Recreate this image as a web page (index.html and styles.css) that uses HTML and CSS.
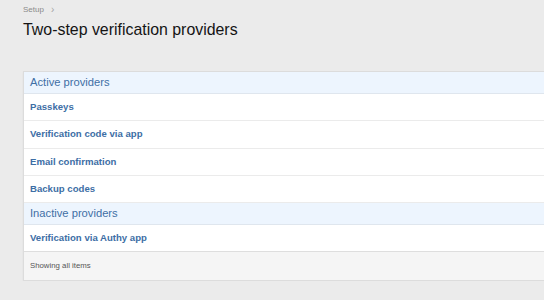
FILE: index.html
```html
<!DOCTYPE html>
<html lang="en">

<head>
    <meta charset="UTF-8">
    <title>Two-step verification providers</title>
    <link rel="stylesheet" href="styles.css">
</head>

<body>
    <div class="side">
        <div class="crumbs">
            <a href="#">Setup</a>
            <span class="sep">&rsaquo;</span>
        </div>
        <h1>Two-step verification providers</h1>

        <section class="blok">
            <h2 class="gruppe">Active providers</h2>
            <a class="raekke" href="#">Passkeys</a>
            <a class="raekke" href="#">Verification code via app</a>
            <a class="raekke" href="#">Email confirmation</a>
            <a class="raekke" href="#">Backup codes</a>
            <h2 class="gruppe">Inactive providers</h2>
            <a class="raekke" href="#">Verification via Authy app</a>
            <div class="fod">Showing all items</div>
        </section>
    </div>
</body>

</html>
```

FILE: styles.css
```css
html,
body {
    margin: 0;
    background: #ebebeb;
    font-family: "Liberation Sans", Arial, sans-serif;
}

.side {
    padding: 4px 0 0 23px;
}

.crumbs {
    display: flex;
    align-items: center;
    gap: 7px;
    font-size: 8px;
    height: 10px;
}

.crumbs a {
    color: #8a8a8a;
    text-decoration: none;
}

.sep {
    color: #a5a5a5;
    font-size: 10px;
}

h1 {
    font-size: 15.9px;
    font-weight: normal;
    color: #141414;
    margin: 6px 0 0 0;
    line-height: 20px;
}

.blok {
    margin-top: 31px;
    background: #fff;
    border: 1px solid #dcdcdc;
    border-right: 0;
    box-shadow: 0 1px 2px rgba(0, 0, 0, .05);
}

.gruppe {
    margin: 0;
    font-size: 11.2px;
    font-weight: normal;
    color: #3f6fa5;
    background: #edf5fe;
    height: 21px;
    line-height: 21px;
    padding-left: 6px;
    border-bottom: 1px solid #dfe6ee;
}

.raekke {
    display: block;
    height: 26.3px;
    line-height: 26px;
    padding-left: 6px;
    font-size: 9.6px;
    font-weight: bold;
    color: #3d6ea5;
    text-decoration: none;
    border-bottom: 1px solid #ebebeb;
}

.raekke:last-of-type {
    border-bottom: 1px solid #dedede;
}

.fod {
    background: #f5f5f5;
    height: 28px;
    line-height: 28px;
    padding-left: 6px;
    font-size: 7.8px;
    color: #555;
}
```
